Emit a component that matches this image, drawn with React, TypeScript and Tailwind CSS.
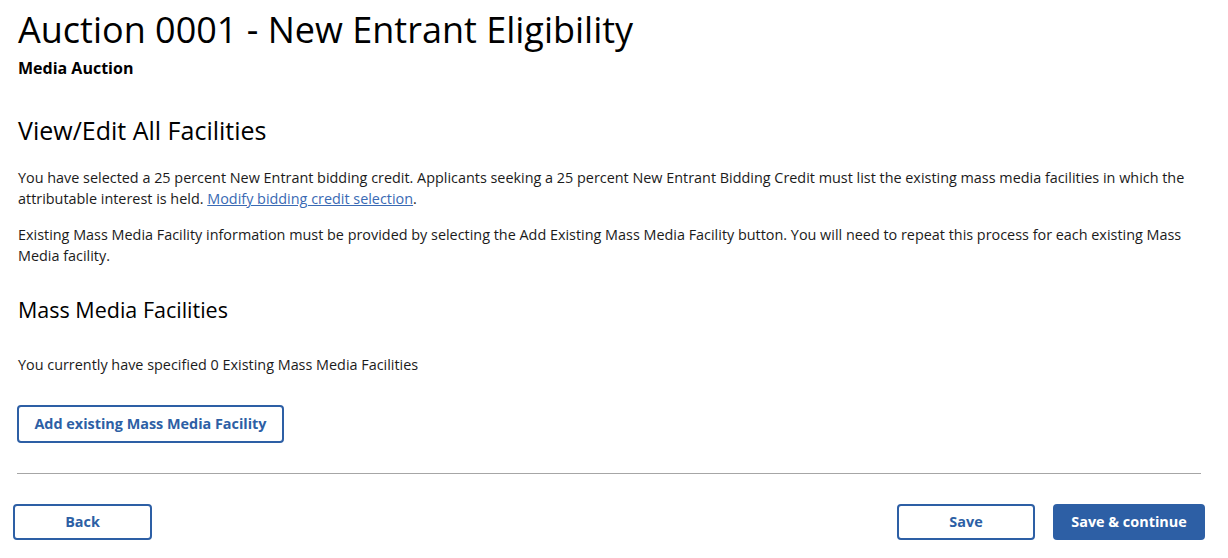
import React from "react";

const font = { fontFamily: '"Open Sans", "Noto Sans", sans-serif' };

const OutlineButton: React.FC<{ label: string; className?: string }> = ({ label, className = "" }) => (
  <button
    className={`h-[36px] rounded-[4px] border-2 border-[#2d5fa5] bg-white text-[14.4px] font-bold text-[#2d5fa5] ${className}`}
  >
    {label}
  </button>
);

export default function App() {
  return (
    <div className="w-[1228px] h-[558px] bg-white text-[#1b1b1b] overflow-hidden" style={font}>
      <div className="pl-[18px] pr-[28px]">
        <h1 className="pt-[5px] text-[36px] leading-[50px] text-black">Auction 0001 - New Entrant Eligibility</h1>
        <div className="mt-[2px] text-[16px] font-bold leading-[22px] text-black">Media Auction</div>

        <h2 className="mt-[35px] text-[25px] leading-[32px] text-black">View/Edit All Facilities</h2>
        <p className="mt-[21px] text-[14.4px] leading-[21px]">
          You have selected a 25 percent New Entrant bidding credit. Applicants seeking a 25 percent New Entrant Bidding
          Credit must list the existing mass media facilities in which the attributable interest is held.{" "}
          <a href="#" className="text-[#3a6ab4] underline">
            Modify bidding credit selection
          </a>
          .
        </p>
        <p className="mt-[15px] text-[14.4px] leading-[21px]">
          Existing Mass Media Facility information must be provided by selecting the Add Existing Mass Media Facility
          button. You will need to repeat this process for each existing Mass Media facility.
        </p>

        <h2 className="mt-[29px] text-[21.5px] leading-[30px] text-black">Mass Media Facilities</h2>
        <p className="mt-[29px] text-[14.4px] leading-[21px]">You currently have specified 0 Existing Mass Media Facilities</p>

        <OutlineButton label="Add existing Mass Media Facility" className="mt-[30px] h-[38px] w-[267px] -ml-px" />
      </div>

      <div className="mx-[17px] mt-[30px] h-px w-[1184px] bg-[#a6a6a6]" />

      <div className="mt-[30px] flex items-center pl-[13px] pr-[23px]">
        <OutlineButton label="Back" className="w-[139px]" />
        <div className="flex-1" />
        <OutlineButton label="Save" className="w-[138px]" />
        <button className="ml-[18px] h-[36px] w-[152px] rounded-[4px] bg-[#2d5fa5] text-[14.4px] font-bold text-white">
          Save &amp; continue
        </button>
      </div>
    </div>
  );
}
